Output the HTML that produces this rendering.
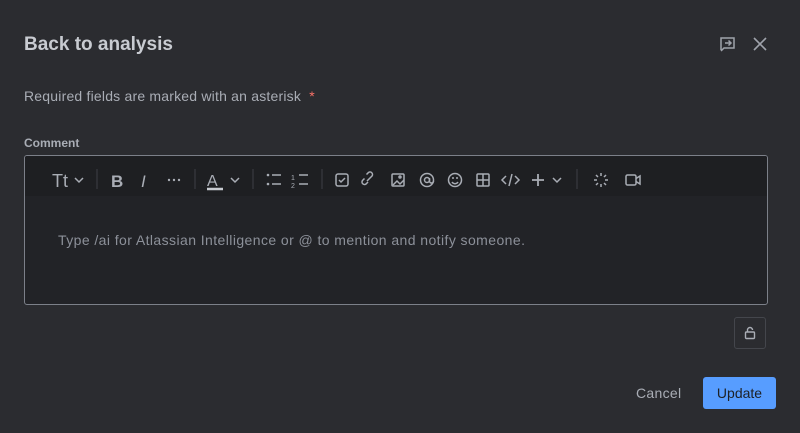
<!DOCTYPE html>
<html><head><meta charset="utf-8"><style>
*{margin:0;padding:0;box-sizing:border-box}
body{width:800px;height:433px;background:#2b2c30;font-family:"Liberation Sans",sans-serif;color:#b6bac2;position:relative;overflow:hidden}
.a{position:absolute;white-space:nowrap}
</style></head><body>
<div class="a" style="left:24px;top:34px;font-size:19px;font-weight:bold;color:#c8cbd1">Back to analysis</div>
<svg class="a" style="left:718px;top:35px" width="20" height="20" viewBox="0 0 20 20" fill="none" stroke="#9fa3ab" stroke-width="1.5"><path d="M3 15V3h13v10H6l-3 3"/><path d="M7 8h6M10.5 5.5 13 8l-2.5 2.5"/></svg>
<svg class="a" style="left:751px;top:35px" width="18" height="18" viewBox="0 0 18 18" stroke="#9fa3ab" stroke-width="1.6"><path d="M3 3l12 12M15 3 3 15"/></svg>
<div class="a" style="left:24px;top:88px;font-size:14px;color:#a9adb5;letter-spacing:0.2px">Required fields are marked with an asterisk &nbsp;<span style="color:#f87168">*</span></div>
<div class="a" style="left:24px;top:136px;font-size:12px;font-weight:bold;color:#a9adb5">Comment</div>
<div class="a" style="left:24px;top:155px;width:744px;height:150px;border:1px solid #7c8089;border-radius:3px;background:#222327;overflow:hidden">
<div style="height:40px;background:#1e1f22"></div>
</div>
<svg class="a" style="left:24px;top:155px" width="744" height="42" fill="none" stroke="#a9adb5" stroke-width="1.5">
<text x="28" y="32" font-family="Liberation Sans" font-size="18" fill="#a9adb5" stroke="none">Tt</text>
<path d="M51 23l4 4 4-4M207 23l4 4 4-4M529 23l4 4 4-4"/>
<g stroke="#3d3f45" stroke-width="1"><path d="M73 14v20M171 14v20M229 14v20M298 14v20M553 14v20"/></g>
<text x="87" y="32" font-family="Liberation Sans" font-size="17" font-weight="bold" fill="#a9adb5" stroke="none">B</text>
<text x="117" y="32" font-family="Liberation Sans" font-size="17" font-style="italic" fill="#a9adb5" stroke="none">I</text>
<g fill="#a9adb5" stroke="none"><circle cx="145" cy="25" r="1.2"/><circle cx="150" cy="25" r="1.2"/><circle cx="155" cy="25" r="1.2"/></g>
<text x="183" y="31" font-family="Liberation Sans" font-size="16" fill="#a9adb5" stroke="none">A</text>
<path d="M183 34h16" stroke="#c8cbd1" stroke-width="2.5"/>
<g fill="#a9adb5" stroke="none"><circle cx="244" cy="20" r="1.3"/><circle cx="244" cy="29" r="1.3"/></g>
<path d="M248 20h9M248 29h9M275 20h9M275 29h9"/>
<text x="267" y="25" font-family="Liberation Sans" font-size="7" fill="#a9adb5" stroke="none">1</text>
<text x="267" y="33" font-family="Liberation Sans" font-size="7" fill="#a9adb5" stroke="none">2</text>
<rect x="312" y="19" width="12" height="12" rx="2"/><path d="M315 25l2 2 4-4"/>
<path d="M344 27l-2 2a2.5 2.5 0 0 1-3.5-3.5l2-2M346 23l2-2a2.5 2.5 0 0 0-3.5-3.5l-2 2M343 26l3-3"/>
<rect x="368" y="19" width="12" height="12" rx="1"/><path d="M369 30l4-4 3 3 4-4"/><circle cx="376" cy="22" r="1"/>
<circle cx="403" cy="25" r="6.5"/><circle cx="403" cy="25" r="2.5"/><path d="M405.5 23v3a2 2 0 0 0 4 0"/>
<circle cx="431" cy="25" r="6.5"/><path d="M428 27a3.5 3.5 0 0 0 6 0"/><g fill="#a9adb5" stroke="none"><circle cx="429" cy="23" r="1"/><circle cx="433" cy="23" r="1"/></g>
<rect x="453" y="19" width="12" height="12" rx="1"/><path d="M459 19v12M453 25h12"/>
<path d="M482 21l-4 4 4 4M491 21l4 4-4 4M488 19l-3 12"/>
<path d="M508 25h12M514 19v12" stroke-width="1.8"/>
<path d="M577 18v3M577 29v3M570 25h3M581 25h3M572 20l2 2M580 28l2 2M582 20l-2 2M572 30l2-2"/>
<rect x="602" y="20" width="10" height="10" rx="1.5"/><path d="M612 23.5l4-2.5v8l-4-2.5"/>
</svg>
<div class="a" style="left:58px;top:232px;font-size:14px;color:#8c9099;letter-spacing:0.42px">Type /ai for Atlassian Intelligence or @ to mention and notify someone.</div>
<div class="a" style="left:734px;top:317px;width:32px;height:32px;border:1px solid #44464c;border-radius:3px"></div>
<svg class="a" style="left:742px;top:325px" width="16" height="16" fill="none" stroke="#a9adb5" stroke-width="1.4"><rect x="3.5" y="7" width="9" height="6.5" rx="1"/><path d="M5.5 7V5a2.5 2.5 0 0 1 5 0"/></svg>
<div class="a" style="left:636px;top:385px;font-size:14px;color:#a9adb5;letter-spacing:0.3px">Cancel</div>
<div class="a" style="left:703px;top:377px;width:73px;height:32px;background:#579dff;border-radius:3px;color:#1d2125;font-size:14px;text-align:center;line-height:32px">Update</div>
</body></html>
